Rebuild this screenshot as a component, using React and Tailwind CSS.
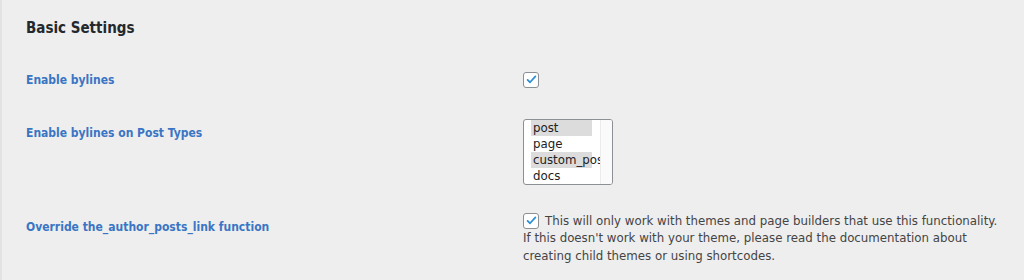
const Check = () => (
  <span className="flex h-4 w-4 shrink-0 items-center justify-center rounded-[3px] border border-[#8c8f94] bg-white">
    <svg viewBox="0 0 16 16" className="h-[13px] w-[13px]">
      <path d="M3.2 8.4l3 3 6.6-7.2" fill="none" stroke="#2d8fd5" strokeWidth="2.2" strokeLinecap="round" strokeLinejoin="round" />
    </svg>
  </span>
);

const Row = ({ label, className, children }) => (
  <div className={`flex ${className}`}>
    <div className="w-[497px] shrink-0 font-['DejaVu_Sans_Condensed','DejaVu_Sans',sans-serif] text-[12px] font-bold text-[#3a75c4]">
      {label}
    </div>
    <div className="flex-1">{children}</div>
  </div>
);

export default function App() {
  const types = [
    { name: 'post', selected: true },
    { name: 'page', selected: false },
    { name: 'custom_post', selected: true },
    { name: 'docs', selected: false },
  ];

  return (
    <div className="h-[280px] w-[1024px] border-l-2 border-[#e2e2e2] bg-[#eeeeee] pl-6 pt-[17px] font-['DejaVu_Sans',sans-serif] text-[#444]">
      <h2 className="font-['DejaVu_Sans_Condensed','DejaVu_Sans',sans-serif] text-[15px] font-bold text-[#23282d]">
        Basic Settings
      </h2>

      <Row label="Enable bylines" className="mt-[31px] items-center">
        <Check />
      </Row>

      <Row label="Enable bylines on Post Types" className="mt-[35px] items-start">
        <div className="-mt-[5px] flex h-[66px] w-[90px] overflow-hidden rounded-[3px] border border-[#8c8f94] bg-white pl-[7px] text-[11.8px] leading-[16px] text-[#222]">
          <div className="w-[69px] shrink-0 overflow-hidden">
            {types.map(t => (
              <div key={t.name} className="w-[61px] whitespace-nowrap">
                <span className={`block pl-[2px] ${t.selected ? 'bg-[#dcdcdc]' : ''}`}>{t.name}</span>
              </div>
            ))}
          </div>
          <div className="flex-1 border-l border-[#ececec] bg-[#fafafa]" />
        </div>
      </Row>

      <Row label="Override the_author_posts_link function" className="mt-[33px] items-start">
        <div className="-mt-[8px] whitespace-nowrap text-[11.8px] leading-[18px] text-[#444]">
          <span className="mr-[6px] inline-flex translate-y-[3px]"><Check /></span>
          This will only work with themes and page builders that use this functionality.
          <br />
          If this doesn't work with your theme, please read the documentation about
          <br />
          creating child themes or using shortcodes.
        </div>
      </Row>
    </div>
  );
}
